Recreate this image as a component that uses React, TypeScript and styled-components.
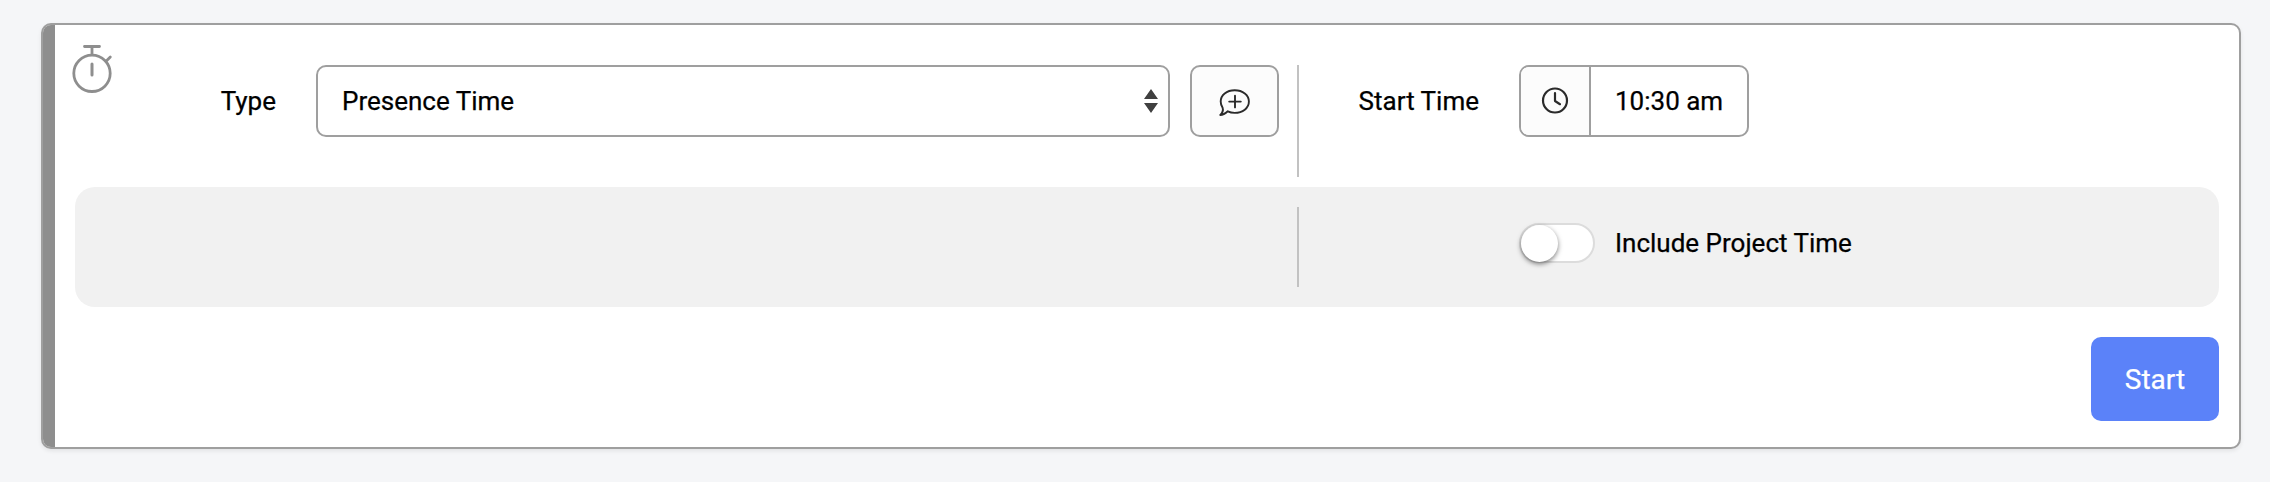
import React, { useState } from 'react';
import styled, { createGlobalStyle } from 'styled-components';

const GlobalStyle = createGlobalStyle`
  * { box-sizing: border-box; }
  body {
    margin: 0;
    background: #f5f6f8;
    font-family: Roboto, "Liberation Sans", sans-serif;
    font-size: 26px;
    color: #000;
    -webkit-text-stroke: 0.25px currentColor;
  }
  button { font: inherit; color: inherit; cursor: pointer; }
`;

const Page = styled.main`
  height: 482px;
  padding: 23px 29px 33px 41px;
`;

const Card = styled.section`
  display: flex;
  height: 426px;
  border: 2px solid #9f9f9f;
  border-radius: 10px;
  background: #fff;
  overflow: hidden;
  box-shadow: 0 2px 4px rgba(0, 0, 0, 0.08);
`;

const Stripe = styled.div`
  width: 12px;
  background: #8e8e8e;
`;

const Content = styled.div`
  flex: 1;
  display: flex;
  flex-direction: column;
  padding: 0 20px;
`;

const FieldsRow = styled.div`
  display: flex;
  align-items: flex-start;
  height: 162px;
  padding-top: 40px;
`;

const TimerIcon = styled.svg`
  flex: none;
  width: 44px;
  height: 54px;
  margin: -22px 0 0 -5px;
`;

const Label = styled.label<{ $width: number; $gap: number }>`
  width: ${(p) => p.$width}px;
  margin-right: ${(p) => p.$gap}px;
  line-height: 72px;
  text-align: right;
  white-space: nowrap;
`;

const SelectBox = styled.button`
  display: flex;
  align-items: center;
  justify-content: space-between;
  width: 854px;
  height: 72px;
  padding: 0 10px 0 24px;
  border: 2px solid #9f9f9f;
  border-radius: 10px;
  background: #fff;
`;

const IconButton = styled.button`
  display: flex;
  align-items: center;
  justify-content: center;
  width: 89px;
  height: 72px;
  margin-left: 20px;
  padding: 0;
  border: 2px solid #9f9f9f;
  border-radius: 10px;
  background: #fcfcfc;
`;

const Divider = styled.div<{ $height: number }>`
  width: 2px;
  height: ${(p) => p.$height}px;
  background: #c2c2c2;
`;

const FieldDivider = styled(Divider)`
  margin-left: 18px;
`;

const TimeGroup = styled.div`
  display: flex;
  width: 230px;
  height: 72px;
  border: 2px solid #9f9f9f;
  border-radius: 10px;
  overflow: hidden;
`;

const TimeAddon = styled.div`
  display: flex;
  align-items: center;
  justify-content: center;
  width: 70px;
  border-right: 2px solid #9f9f9f;
  background: #fcfcfc;
`;

const TimeValue = styled.div`
  padding-left: 24px;
  line-height: 68px;
`;

const OptionsPanel = styled.div`
  display: flex;
  align-items: center;
  height: 120px;
  padding-left: 1222px;
  border-radius: 20px;
  background: #f1f1f1;
`;

const ToggleTrack = styled.button<{ $on: boolean }>`
  display: flex;
  align-items: center;
  justify-content: ${(p) => (p.$on ? 'flex-end' : 'flex-start')};
  width: 76px;
  height: 40px;
  margin: -8px 20px 0 220px;
  padding: 0;
  border: 2px solid #dcdcdc;
  border-radius: 20px;
  background: ${(p) => (p.$on ? '#5b82f9' : '#fff')};
`;

const ToggleKnob = styled.span`
  width: 37px;
  height: 37px;
  margin: 0 -0.5px;
  border-radius: 50%;
  background: #fff;
  box-shadow: 0 2px 5px rgba(0, 0, 0, 0.5);
`;

const OptionText = styled.span`
  margin-top: -8px;
  line-height: 40px;
`;

const Actions = styled.div`
  display: flex;
  justify-content: flex-end;
  padding-top: 30px;
`;

const StartButton = styled.button`
  width: 128px;
  height: 84px;
  border: 0;
  border-radius: 10px;
  background: #5b82f9;
  color: #fff;
  font-size: 28px;
  -webkit-text-stroke: 0.25px #fff;
`;

export default function App() {
  const [includeProject, setIncludeProject] = useState(false);
  return (
    <>
      <GlobalStyle />
      <Page>
        <Card>
          <Stripe />
          <Content>
            <FieldsRow>
              <TimerIcon viewBox="70 43 44 54" fill="none" stroke="#8e8e8e" strokeWidth="2.8" strokeLinecap="round">
                <circle cx="92" cy="73.3" r="18.2" />
                <path d="M84.5 46.5h15M92 47v7.5M106.3 61l4-4" />
                <path d="M92 64v11" strokeWidth="3" />
              </TimerIcon>
              <Label $width={162} $gap={40}>Type</Label>
              <SelectBox>
                Presence Time
                <svg width="14" height="24" viewBox="0 0 14 24" fill="#404040">
                  <path d="M7 0l7 10H0zM0 14h14l-7 10z" />
                </svg>
              </SelectBox>
              <IconButton aria-label="Add comment">
                <svg width="32" height="32" viewBox="1218.7 85 32 32" fill="none" stroke="#2b2b2b" strokeWidth="1.9" strokeLinecap="round" strokeLinejoin="round">
                  <path d="M1227.5 111.3C1225 113.600 1223 115 1220 115c2.200-2.200 3.200-4.600 2.300-7.200-1.300-2-1.900-4-1.900-6.300 0-6.500 6-11.200 14-11.200s14.200 4.700 14.200 11.300-6.200 11.300-14.200 11.300c-2.500 0-4.800-.5-6.900-1.600z" />
                  <path d="M1228.900 101.600h11.600M1234.700 95.800v11.600" />
                </svg>
              </IconButton>
              <FieldDivider $height={112} />
              <Label $width={180} $gap={40}>Start Time</Label>
              <TimeGroup>
                <TimeAddon>
                  <svg width="28" height="28" viewBox="0 0 28 28" fill="none" stroke="#2b2b2b" strokeWidth="2.200" strokeLinecap="round" strokeLinejoin="round">
                    <circle cx="14" cy="13.500" r="12" />
                    <path d="M14 6v8l5 3.200" />
                  </svg>
                </TimeAddon>
                <TimeValue>10:30 am</TimeValue>
              </TimeGroup>
            </FieldsRow>
            <OptionsPanel>
              <Divider $height={80} />
              <ToggleTrack
                $on={includeProject}
                role="switch"
                aria-checked={includeProject}
                aria-label="Include Project Time"
                onClick={() => setIncludeProject(!includeProject)}
              >
                <ToggleKnob />
              </ToggleTrack>
              <OptionText>Include Project Time</OptionText>
            </OptionsPanel>
            <Actions>
              <StartButton>Start</StartButton>
            </Actions>
          </Content>
        </Card>
      </Page>
    </>
  );
}
